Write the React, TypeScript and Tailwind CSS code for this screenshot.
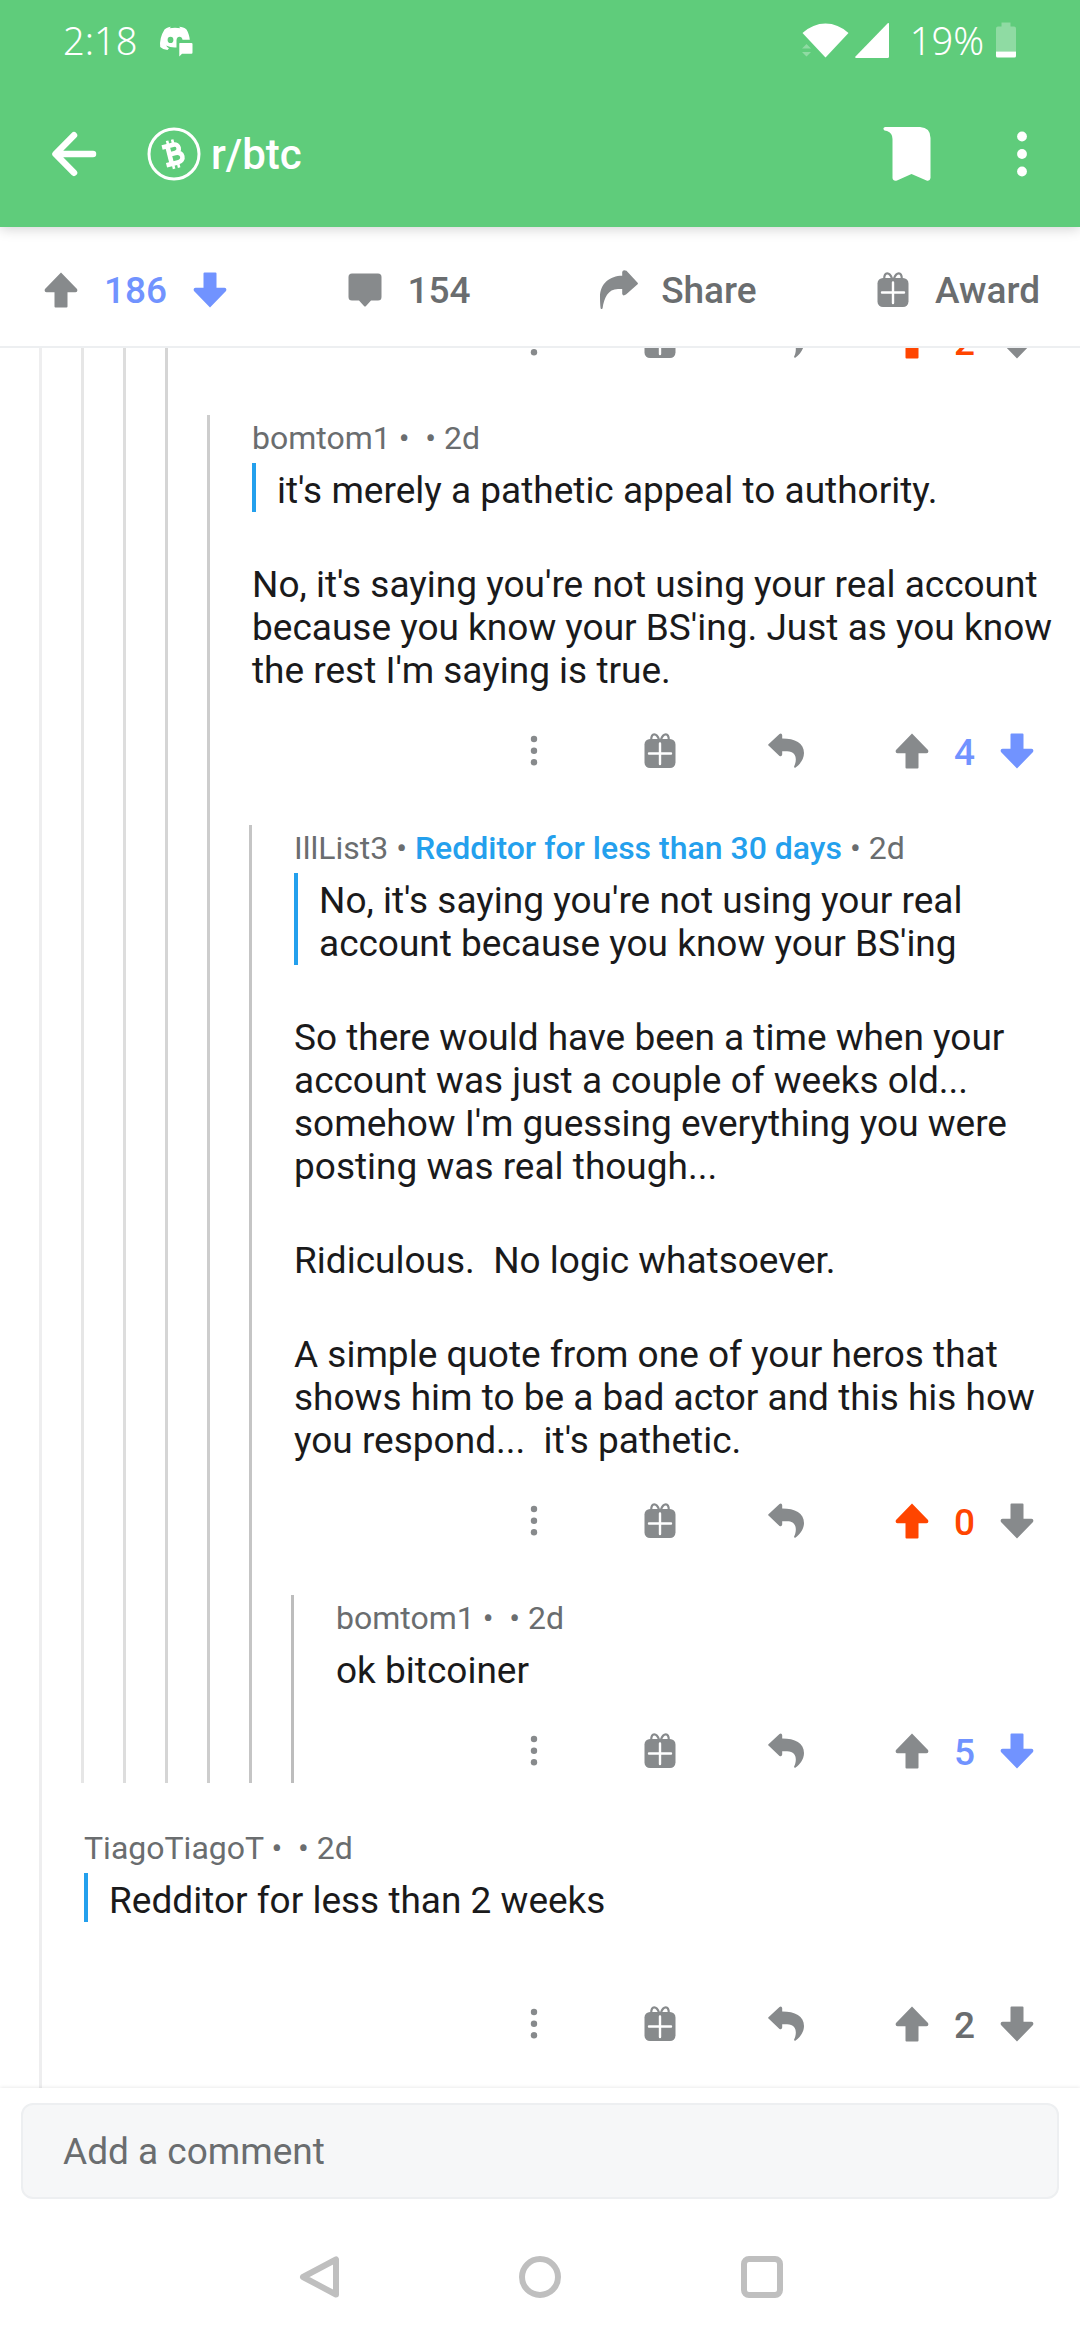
import React from "react";

type IconProps = { className?: string };

/* ---------- icons ---------- */

const UpArrow = ({ className = "" }: IconProps) => (
  <svg viewBox="0 0 34 36" className={`w-[34px] h-9 ${className}`} fill="currentColor" aria-hidden="true">
    <path d="M17 0.5 L33 17 Q34.2 19.8 31.5 20.2 H23.5 V34.5 Q23.500 35.5 22.5 35.500 H11.500 Q10.500 35.500 10.500 34.500 V20.200 H2.500 Q-0.200 19.800 1 17 Z" />
  </svg>
);

const DownArrow = ({ className = "" }: IconProps) => (
  <svg viewBox="0 0 34 36" className={`w-[34px] h-9 ${className}`} fill="currentColor" aria-hidden="true">
    <path d="M17 35.500 L33 19 Q34.200 16.200 31.500 15.800 H23.500 V1.500 Q23.500 0.500 22.500 0.500 H11.500 Q10.500 0.500 10.500 1.500 V15.800 H2.500 Q-0.200 16.200 1 19 Z" />
  </svg>
);

const Gift = () => (
  <svg viewBox="0 0 32 36" className="w-8 h-9" fill="none" aria-hidden="true">
    <path
      d="M7.200 7 C7.200 -0.500 12.600 -0.500 15.200 7 M16.800 7 C19.400 -0.500 24.800 -0.500 24.800 7"
      stroke="currentColor"
      strokeWidth="2.200"
    />
    <rect x="0.500" y="6" width="31" height="29" rx="5.500" fill="currentColor" />
    <path d="M16 10.500 V31 M5 20.500 H27" stroke="#fff" strokeWidth="2.400" strokeLinecap="round" />
  </svg>
);

const Reply = () => (
  <svg viewBox="0 0 38 36" className="w-[38px] h-9" fill="currentColor" aria-hidden="true">
    <path d="M1.500 11.200 L12.500 0.900 Q14.800 -0.200 15.200 2.200 V5.600 C28 5.600 37 10 37 20 C37 26 33 31.500 28.300 34.700 Q27 35 27.100 33.600 C30 27.500 30.200 18.200 20 18.200 H15.200 V21.600 Q14.800 24 12.500 22.900 L1.500 12.600 Q0.800 11.900 1.500 11.200 Z" />
  </svg>
);

const Share = () => (
  <svg viewBox="0 0 40 40" className="w-10 h-10" fill="currentColor" aria-hidden="true">
    <path d="M38.600 12.700 L27.500 0.800 Q23.800 -1 23.200 2 V5.800 C11 5.800 1 13.500 1 27 C1 31 1.200 35 1.600 38.200 Q2.400 40 3.600 38.200 C5 28 9 19 19 19 H23.200 V23.800 Q23.800 26.600 27 24.600 L38.600 14.300 Q39.300 13.500 38.600 12.700 Z" />
  </svg>
);

const CommentIcon = () => (
  <svg viewBox="0 0 34 34" className="w-[34px] h-[34px]" fill="currentColor" aria-hidden="true">
    <path d="M4 0.500 H30 Q33.500 0.500 33.500 4 V24 Q33.500 27.500 30 27.500 H23 L18 33 Q17 34 16 33 L11 27.500 H4 Q0.500 27.500 0.500 24 V4 Q0.500 0.500 4 0.500 Z" />
  </svg>
);

const Dots = () => (
  <svg viewBox="0 0 8 32" className="w-2 h-8" fill="currentColor" aria-hidden="true">
    <circle cx="4" cy="4" r="3.200" />
    <circle cx="4" cy="15.700" r="3.200" />
    <circle cx="4" cy="27.300" r="3.200" />
  </svg>
);

const Discord = () => (
  <svg viewBox="0 0 34 32" className="w-[34px] h-8" aria-hidden="true">
    <path
      fill="#fff"
      fillRule="evenodd"
      d="M5.500 3.500 C8 1.500 10 1 12 0.800 L10.500 2.200 Q16 1.300 21.500 2.200 L20 0.800 C23 1 25.500 1.800 27.500 3.500 C29.500 7 30.500 10.500 30.800 13.800 H23.500 Q23 10.800 20.500 10.800 Q18 10.800 17.500 14 V21.500 Q12 22 7 19.500 Q8.500 21.500 10 22.300 L8.500 24 Q4 23.800 1.200 21 Q0.200 12 5.500 3.500 Z M11.500 10.800 A2.900 3.100 0 1 0 11.500 17 A2.900 3.100 0 1 0 11.500 10.800 Z"
    />
    <path fill="#fff" d="M20.500 17 H32.500 Q33.500 17 33.500 18 V26.500 Q33.500 27.700 32.500 27.700 H23 L20.300 30.500 V18 Z" />
  </svg>
);

const Wifi = () => (
  <svg viewBox="0 0 50 38" className="w-[50px] h-[38px]" aria-hidden="true">
    <path fill="#fff" d="M25.500 36.500 L2.500 12 Q13 2.500 25.500 2.500 Q38 2.500 48.500 12 Z" />
    <path fill="#fff" fillOpacity="0.300" d="M2 27.500 L6.500 23 L11 27.500 Z M2 31 L6.500 35.500 L11 31 Z" />
  </svg>
);

const Signal = () => (
  <svg viewBox="0 0 36 38" className="w-9 h-[38px]" aria-hidden="true">
    <path fill="#fff" d="M34 2 Q35 1.500 35 3 V35.500 Q35 37 33.500 37 H2 Q0.500 36.800 1.500 35.500 Z" />
  </svg>
);

const Battery = () => (
  <svg viewBox="0 0 20 36" className="w-5 h-9" aria-hidden="true">
    <path fill="#fff" fillOpacity="0.300" d="M5.500 0.500 H14.500 V4.500 H18 Q20 4.500 20 6.500 V29.500 H0 V6.500 Q0 4.500 2 4.500 H5.500 Z" />
    <path fill="#fff" d="M0 29.500 H20 V34 Q20 35.500 18.500 35.500 H1.500 Q0 35.500 0 34 Z" />
  </svg>
);

const Back = () => (
  <svg viewBox="0 0 46 46" className="w-[46px] h-[46px]" fill="none" stroke="#fff" strokeWidth="6.500" strokeLinecap="round" strokeLinejoin="round" aria-hidden="true">
    <path d="M42 23 H5 M23 4.300 L4.500 23 L23 41.700" />
  </svg>
);

const Bitcoin = () => (
  <svg viewBox="0 0 54 54" className="w-[54px] h-[54px]" fill="none" stroke="#fff" aria-hidden="true">
    <circle cx="27" cy="27" r="25" strokeWidth="3" />
    <g transform="rotate(-14 27 27)">
      <path
        strokeWidth="4.600"
        strokeLinejoin="round"
        d="M22.500 17.500 V36.500 M17 17.800 H28.500 C34.500 17.800 34.500 26.300 28.500 26.300 H22.500 M28.500 26.300 C36.500 26.300 36.500 36.200 28.500 36.200 H17"
      />
      <path strokeWidth="2.600" d="M23.500 12.500 V17 M28.700 12.500 V17 M23.500 37 V41.500 M28.700 37 V41.500" />
    </g>
  </svg>
);

const Bookmark = () => (
  <svg viewBox="0 0 48 54" className="w-12 h-[54px]" fill="#fff" aria-hidden="true">
    <path d="M2 0 H37 Q47.500 0.500 47.500 11 V51 Q47 54.500 43.500 53.500 L28.500 47 L14 53.500 Q10 54.500 9.500 51 V12 Q9.500 6 4 4 L1.500 3.500 Q-1 1.500 2 0 Z" />
  </svg>
);

const MenuDots = () => (
  <svg viewBox="0 0 10 46" className="w-2.5 h-[46px]" fill="#fff" aria-hidden="true">
    <circle cx="5" cy="5.500" r="4.900" />
    <circle cx="5" cy="23" r="4.900" />
    <circle cx="5" cy="40.500" r="4.900" />
  </svg>
);

/* ---------- comments ---------- */

type Vote = "up" | "down" | "none";

const scoreColor: Record<Vote, string> = {
  up: "text-[#ff4500]",
  down: "text-[#7193ff]",
  none: "text-[#6a6d6f]",
};

function Actions({ score, vote }: { score: number; vote: Vote }) {
  return (
    <div className="flex h-16 items-center justify-end pr-[33px] text-[#878a8c]">
      <button aria-label="More options" className="flex w-[126px] justify-center"><Dots /></button>
      <button aria-label="Give award" className="flex w-[126px] justify-center"><Gift /></button>
      <button aria-label="Reply" className="mr-[33px] flex w-[126px] justify-center"><Reply /></button>
      <button aria-label="Upvote" className="flex w-[60px] justify-center">
        <UpArrow className={vote === "up" ? "text-[#ff4500]" : ""} />
      </button>
      <span className={`w-[45px] pt-0.5 text-center text-[37px] leading-[43px] font-medium ${scoreColor[vote]}`}>{score}</span>
      <button aria-label="Downvote" className="flex w-[60px] justify-center">
        <DownArrow className={vote === "down" ? "text-[#7193ff]" : ""} />
      </button>
    </div>
  );
}

/* The rule starts level with the end of the header, above the first line of text. */
function Quote({ children }: { children: React.ReactNode }) {
  return <blockquote className="-mt-1.5 border-l-4 border-[#24a0ed] pt-1.5 pl-[21px]">{children}</blockquote>;
}

type CommentProps = {
  author: string;
  flair?: string;
  score: number;
  vote: Vote;
  children: React.ReactNode;
};

function Comment({ author, flair, score, vote, children }: CommentProps) {
  return (
    <article>
      <header className="h-12 pl-[42px] pt-1 text-[32px] leading-[38px] whitespace-pre text-[#6a6d6f]">
        {author} • <span className="font-medium text-[#24a0ed]">{flair}</span> • 2d
      </header>
      <div className="flex flex-col gap-[51px] pt-1.5 pr-6 pl-[42px] text-[37px] leading-[43px] whitespace-pre-wrap text-[#1a1a1b]">
        {children}
      </div>
      <div className="pt-[27px]"><Actions score={score} vote={vote} /></div>
    </article>
  );
}

/* A reply level: its left rule runs down past everything nested in it. */
function Thread({ line, children }: { line: string; children: React.ReactNode }) {
  return <section className={`border-l-[3px] ${line}`}>{children}</section>;
}

const nested = "pl-[39px]";
const spaced = "mt-[42px] pl-[39px]";

export default function App() {
  return (
    <div className="flex h-screen flex-col bg-white font-[Roboto,sans-serif]">
      <div className="relative z-10 bg-[#5fcc7b] shadow-[0_2px_12px_rgba(0,0,0,0.18)]">
        <div className="flex h-20 items-center pr-16 pl-[63px] font-['Noto_Sans',sans-serif] text-[38px] font-light text-white">
          <span>2:18</span>
          <span className="ml-[22px] pt-1"><Discord /></span>
          <span className="ml-auto flex items-center">
            <Wifi />
            <span className="ml-1"><Signal /></span>
            <span className="ml-5">19%</span>
            <span className="ml-3"><Battery /></span>
          </span>
        </div>
        <header className="flex h-[147px] items-center pr-[53px] pl-[51px] text-white">
          <button aria-label="Back"><Back /></button>
          <a href="#btc" className="ml-[50px] flex items-center gap-2.5">
            <Bitcoin />
            <span className="pt-0.5 text-[42px] leading-[50px] font-medium">r/btc</span>
          </a>
          <button aria-label="Save post" className="ml-auto"><Bookmark /></button>
          <button aria-label="Menu" className="ml-[86px]"><MenuDots /></button>
        </header>
      </div>

      <div className="flex h-[121px] shrink-0 items-center justify-between border-b-2 border-[#edeff1] pt-1.5 pr-10 pl-11 text-[37px] leading-[43px] font-medium text-[#6a6d6f]">
        <div className="flex items-center gap-[26px]">
          <button aria-label="Upvote post" className="text-[#878a8c]"><UpArrow /></button>
          <span className="pt-0.5 text-[#7193ff]">186</span>
          <button aria-label="Downvote post" className="text-[#7193ff]"><DownArrow /></button>
        </div>
        <button className="flex items-center gap-[26px] pr-1">
          <span className="text-[#878a8c]"><CommentIcon /></span>
          <span className="pt-0.5">154</span>
        </button>
        <button className="flex items-center gap-[22px] pl-1">
          <span className="text-[#878a8c]"><Share /></span>
          <span className="pt-0.5">Share</span>
        </button>
        <button className="flex items-center gap-[26px]">
          <span className="text-[#878a8c]"><Gift /></span>
          <span className="pt-0.5">Award</span>
        </button>
      </div>

      <main className="min-h-0 flex-1 overflow-hidden pl-[39px]">
        <div className="-mt-[39px] min-h-full border-l-[3px] border-[#eeeeef] pb-10">
          <div className={nested}>
            <Thread line="border-[#e6e6e6]">
              <div className={nested}>
                <Thread line="border-[#dddddd]">
                  <div className={nested}>
                    <Thread line="border-[#d5d5d5]">
                      <Actions score={2} vote="up" />
                      <div className={spaced}>
                        <Thread line="border-[#cdcdcd]">
                          <Comment author="bomtom1" score={4} vote="down">
                            <Quote>it's merely a pathetic appeal to authority.</Quote>
                            <p>No, it's saying you're not using your real account because you know your BS'ing. Just as you know the rest I'm saying is true.</p>
                          </Comment>
                          <div className={spaced}>
                            <Thread line="border-[#c5c5c5]">
                              <Comment author="IllList3" flair="Redditor for less than 30 days" score={0} vote="up">
                                <Quote>No, it's saying you're not using your real account because you know your BS'ing</Quote>
                                <p>So there would have been a time when your account was just a couple of weeks old... somehow I'm guessing everything you were posting was real though...</p>
                                <p>Ridiculous.  No logic whatsoever.</p>
                                <p>A simple quote from one of your heros that shows him to be a bad actor and this his how you respond...  it's pathetic.</p>
                              </Comment>
                              <div className={spaced}>
                                <Thread line="border-[#bdbdbd]">
                                  <Comment author="bomtom1" score={5} vote="down">
                                    <p>ok bitcoiner</p>
                                  </Comment>
                                </Thread>
                              </div>
                            </Thread>
                          </div>
                        </Thread>
                      </div>
                    </Thread>
                  </div>
                </Thread>
              </div>
            </Thread>
          </div>
          <div className="mt-[42px]">
            <Comment author="TiagoTiagoT" score={2} vote="none">
              <div className="pb-[43px]">
                <Quote>Redditor for less than 2 weeks</Quote>
              </div>
            </Comment>
          </div>
        </div>
      </main>

      <footer className="relative bg-white px-[21px] pt-[15px] shadow-[0_0_4px_rgba(0,0,0,0.12)]">
        <input
          type="text"
          aria-label="Add a comment"
          placeholder="Add a comment"
          className="block h-24 w-full rounded-[12px] border-2 border-[#edeff1] bg-[#f6f7f8] px-10 text-[37px] leading-[43px] text-[#1a1a1b] outline-none placeholder:text-[#6a6d6f]"
        />
        <nav className="flex h-[141px] items-center justify-center gap-[180px] pt-3.5 text-[#bfbfbf]">
          <button aria-label="System back">
            <svg viewBox="0 0 42 42" className="h-[42px] w-[42px]" fill="none" stroke="currentColor" strokeWidth="6" strokeLinejoin="round" aria-hidden="true">
              <path d="M39 3.500 V38.500 L6 21 Z" />
            </svg>
          </button>
          <button aria-label="Home">
            <svg viewBox="0 0 42 42" className="h-[42px] w-[42px]" fill="none" stroke="currentColor" strokeWidth="6" aria-hidden="true">
              <circle cx="21" cy="21" r="18" />
            </svg>
          </button>
          <button aria-label="Recent apps">
            <svg viewBox="0 0 42 42" className="h-[42px] w-[42px]" fill="none" stroke="currentColor" strokeWidth="6" aria-hidden="true">
              <rect x="3" y="3" width="36" height="36" rx="5" />
            </svg>
          </button>
        </nav>
      </footer>
    </div>
  );
}
